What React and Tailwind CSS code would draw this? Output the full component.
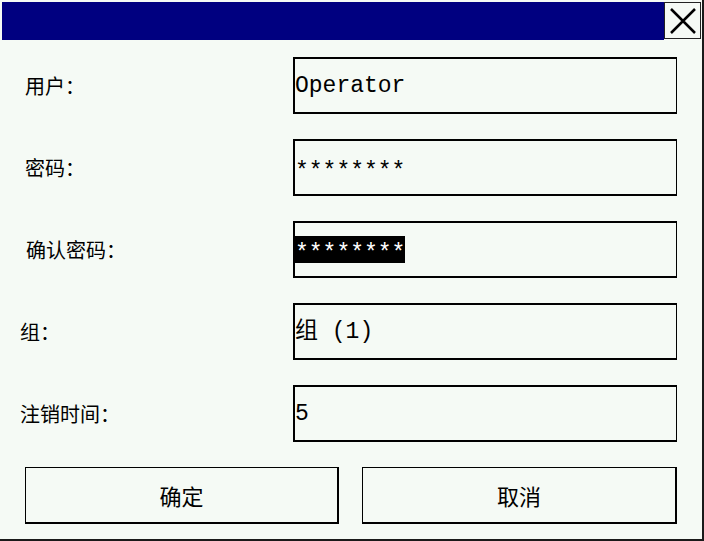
const rows = [
  { label: "用户：", value: "Operator", labelPad: "pl-[25px]" },
  { label: "密码：", value: "********", labelPad: "pl-[25px]", masked: true },
  { label: "确认密码：", value: "********", labelPad: "pl-[26px]", masked: true, selected: true },
  { label: "组：", value: "组 (1)", labelPad: "pl-[20px]" },
  { label: "注销时间：", value: "5", labelPad: "pl-[20px]" },
];

const Field = ({ value, selected, masked }) => (
  <div className="w-[384px] h-[57px] border-t-2 border-l-2 border-r border-b-2 border-black flex items-center">
    <span
      className={`h-[27px] text-[23px] leading-[27px] font-['Liberation_Mono','Noto_Sans_CJK_SC',monospace] ${
        selected ? "bg-black text-white" : "text-black"
      }`}
    >
      <span className={masked ? "relative top-[5px]" : "relative top-[1px]"}>{value}</span>
    </span>
  </div>
);

const App = () => {
  return (
    <div className="w-[704px] h-[541px] bg-[#f5faf5] border-r-2 border-b-2 border-[#1a1a1a] flex flex-col font-['Noto_Sans_CJK_SC',sans-serif] text-black overflow-hidden">
      {/* title bar */}
      <div className="flex pl-[2px] pt-[2px] pr-[1px] h-[40px]">
        <div className="flex-1 bg-[#000080]" />
        <button className="w-[37px] h-[37px] bg-[#f5faf5] border border-[#222] flex items-center justify-center">
          <svg width="30" height="30" viewBox="0 0 30 30">
            <path d="M3 3 L27 27 M27 3 L3 27" stroke="black" strokeWidth="2.5" fill="none" />
          </svg>
        </button>
      </div>

      {/* form */}
      <div className="flex flex-col gap-[25px] pt-[17px]">
        {rows.map((row, index) => (
          <div key={index} className="flex items-center">
            <div className={`w-[293px] text-[20px] ${row.labelPad}`}>{row.label}</div>
            <Field value={row.value} selected={row.selected} masked={row.masked} />
          </div>
        ))}
      </div>

      {/* buttons */}
      <div className="flex gap-[23px] pl-[25px] pt-[25px]">
        <button className="w-[314px] h-[57px] border-t border-l border-r-2 border-b-2 border-black text-[22px]">
          确定
        </button>
        <button className="w-[315px] h-[57px] border-t border-l border-r-2 border-b-2 border-black text-[22px]">
          取消
        </button>
      </div>
    </div>
  );
};

export default App;
